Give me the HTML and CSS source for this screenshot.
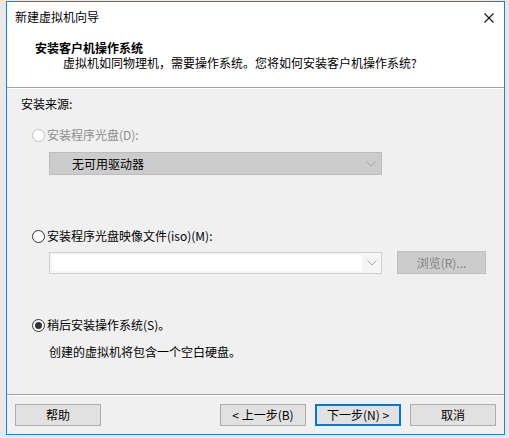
FILE: index.html
```html
<!DOCTYPE html>
<html lang="zh-CN">
<head>
<meta charset="utf-8">
<link rel="stylesheet" href="styles.css">
</head>
<body>
<div class="window">
  <div class="titlebar">
    <span class="title">新建虚拟机向导</span>
    <svg class="close" width="10" height="10" viewBox="0 0 10 10"><path d="M0.5 0.5 L9.5 9.5 M9.5 0.5 L0.5 9.5" stroke="#111" stroke-width="1.1" fill="none"/></svg>
  </div>
  <div class="header">
    <div class="h-title">安装客户机操作系统</div>
    <div class="h-sub">虚拟机如同物理机，需要操作系统。您将如何安装客户机操作系统?</div>
  </div>
  <div class="content">
    <div class="label">安装来源:</div>
    <div class="radio-row disabled r1"><span class="radio"></span><span>安装程序光盘(D):</span></div>
    <div class="select disabled-select">
      <span class="sel-text">无可用驱动器</span>
      <svg class="chev" width="10" height="6" viewBox="0 0 10 6"><path d="M0.5 0.5 L5 5 L9.5 0.5" stroke="#a8a8a8" fill="none"/></svg>
    </div>
    <div class="radio-row r2"><span class="radio"></span><span>安装程序光盘映像文件(iso)(M):</span></div>
    <div class="iso-row">
      <div class="combo">
        <div class="combo-field"></div>
        <div class="combo-arrow"><svg width="10" height="6" viewBox="0 0 10 6"><path d="M0.5 0.5 L5 5 L9.5 0.5" stroke="#a8a8a8" fill="none"/></svg></div>
      </div>
      <div class="browse">浏览(R)...</div>
    </div>
    <div class="radio-row r3"><span class="radio checked"></span><span>稍后安装操作系统(S)。</span></div>
    <div class="note">创建的虚拟机将包含一个空白硬盘。</div>
  </div>
  <div class="footer">
    <div class="btn">帮助</div>
    <div class="spacer"></div>
    <div class="btn">&lt; 上一步(B)</div>
    <div class="btn default">下一步(N) &gt;</div>
    <div class="btn">取消</div>
  </div>
</div>
</body>
</html>
```
FILE: styles.css
```css
html, body {
  margin: 0;
  padding: 0;
}
body {
  width: 509px;
  height: 438px;
  background: #e9e9e9;
  font-family: "Noto Sans CJK SC", "Microsoft YaHei", sans-serif;
  font-size: 12px;
  line-height: 16px;
  color: #000;
  overflow: hidden;
}
.window {
  box-sizing: border-box;
  width: 499px;
  height: 434px;
  margin: 1px 0 0 6px;
  border: 1px solid #1883d7;
  background: #f0f0f0;
  display: flex;
  flex-direction: column;
}
.titlebar {
  height: 30px;
  background: #fff;
  display: flex;
  align-items: center;
  padding-left: 8px;
  padding-right: 10px;
}
.title {
  flex: 1;
  margin-top: -1px;
}
.close {
  display: block;
  margin-top: 1px;
}
.header {
  background: #fff;
  height: 56px;
  border-bottom: 1px solid #a0a0a0;
  padding-left: 28px;
  padding-top: 8px;
  box-sizing: border-box;
}
.h-title {
  font-weight: bold;
  line-height: 15px;
}
.h-sub {
  padding-left: 28px;
  line-height: 15px;
}
.content {
  flex: 1;
  border-top: 1px solid #fff;
  padding-left: 14px;
  display: flex;
  flex-direction: column;
}
.label {
  margin-top: 7px;
}
.radio-row {
  display: flex;
  align-items: center;
  padding-left: 11px;
  height: 16px;
}
.radio-row.r1 { margin-top: 15px; }
.radio-row.r2 { margin-top: 53px; }
.radio-row.r3 { margin-top: 43px; }
.radio {
  box-sizing: border-box;
  width: 13px;
  height: 13px;
  border: 1px solid #333;
  border-radius: 50%;
  background: #fff;
  margin-right: 2px;
  position: relative;
}
.radio.checked::after {
  content: "";
  position: absolute;
  left: 2px;
  top: 2px;
  width: 7px;
  height: 7px;
  border-radius: 50%;
  background: #333;
}
.radio-row.disabled {
  color: #8d8d8d;
}
.radio-row.disabled .radio {
  border-color: #c2c2c2;
}
.select {
  box-sizing: border-box;
  margin-top: 9px;
  margin-left: 28px;
  width: 333px;
  height: 23px;
  border: 1px solid #bcbcbc;
  background: #cccccc;
  display: flex;
  align-items: center;
  padding-left: 22px;
  padding-right: 5px;
}
.sel-text {
  flex: 1;
}
.chev {
  display: block;
}
.iso-row {
  display: flex;
  margin-top: 8px;
  margin-left: 28px;
  height: 22px;
}
.combo {
  box-sizing: border-box;
  width: 333px;
  height: 22px;
  border: 1px solid #cfcfcf;
  background: #f5f5f5;
  display: flex;
  padding: 2px 0 2px 2px;
}
.combo-field {
  flex: 1;
  background: #fff;
}
.combo-arrow {
  width: 19px;
  display: flex;
  align-items: center;
  justify-content: center;
}
.combo-arrow svg { display: block; }
.browse {
  box-sizing: border-box;
  margin-left: 15px;
  width: 89px;
  height: 23px;
  margin-top: -1px;
  border: 1px solid #bfbfbf;
  background: #cccccc;
  color: #838383;
  display: flex;
  align-items: center;
  justify-content: center;
}
.note {
  margin-top: 11px;
  padding-left: 28px;
}
.footer {
  height: 40px;
  border-top: 1px solid #a0a0a0;
  box-shadow: inset 0 1px 0 #fff;
  display: flex;
  align-items: flex-start;
  padding: 9px 8px 0 8px;
  box-sizing: border-box;
  gap: 9px;
}
.spacer { flex: 1; }
.btn {
  box-sizing: border-box;
  width: 86px;
  height: 22px;
  border: 1px solid #adadad;
  background: #e1e1e1;
  display: flex;
  align-items: center;
  justify-content: center;
}
.btn.default {
  border: 2px solid #0078d7;
}
```
